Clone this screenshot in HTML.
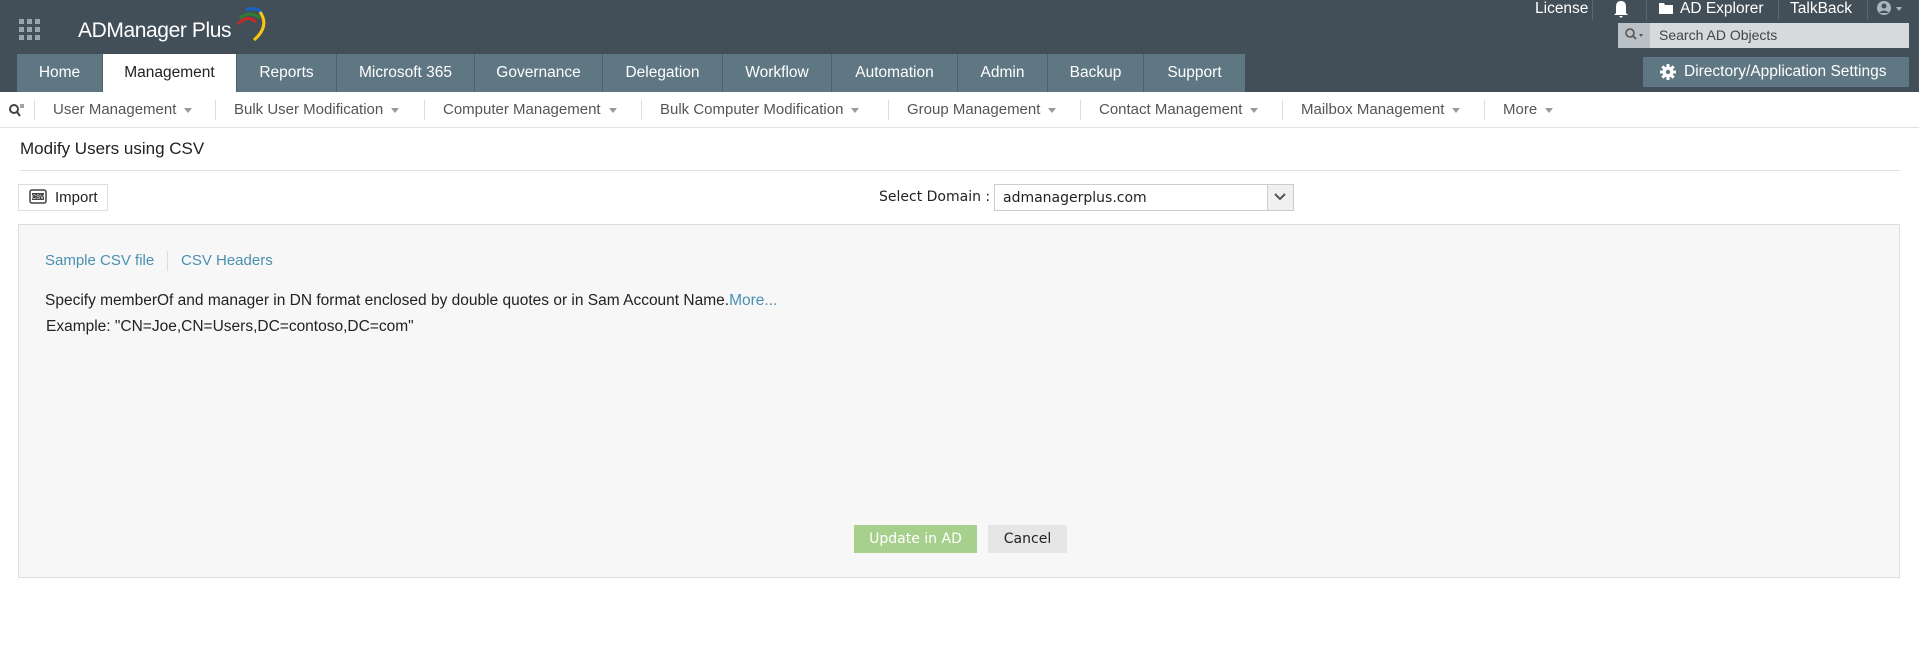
<!DOCTYPE html>
<html><head><meta charset="utf-8"><style>
*{margin:0;padding:0;box-sizing:border-box}
body{width:1919px;height:665px;background:#fff;font-family:"Liberation Sans",sans-serif;position:relative;overflow:hidden;color:#222}
.a{position:absolute}
#hdr{left:0;top:0;width:1919px;height:92px;background:#434f58}
.tab{position:absolute;top:54px;height:38px;background:#5f7683;color:#fff;font-size:15.5px;line-height:38px;text-align:center;border-right:1px solid #4f606b}
.tab.on{background:#fff;color:#222}
.top{color:#fff;font-size:15.5px;top:0;line-height:18px}
.sub{top:92px;height:36px;line-height:36px;font-size:15px;color:#555;border-bottom:1px solid #e2e2e2;width:1919px;left:0}
.sub span{position:absolute;top:0}
.sep{position:absolute;top:8px;width:1px;height:20px;background:#ddd}
.car{display:inline-block;width:0;height:0;border-left:4px solid transparent;border-right:4px solid transparent;border-top:5px solid #999;margin-left:8px;vertical-align:middle}
.v{font-family:"DejaVu Sans","Liberation Sans",sans-serif}
</style></head><body>
<div id="hdr" class="a"></div>
<svg class="a" style="left:19px;top:19px" width="22" height="22"><g fill="#9aa5ad"><rect x="0" y="0" width="5" height="5"/><rect x="8" y="0" width="5" height="5"/><rect x="16" y="0" width="5" height="5"/><rect x="0" y="8" width="5" height="5"/><rect x="8" y="8" width="5" height="5"/><rect x="16" y="8" width="5" height="5"/><rect x="0" y="16" width="5" height="5"/><rect x="8" y="16" width="5" height="5"/><rect x="16" y="16" width="5" height="5"/></g></svg>
<div class="a" style="left:78px;top:16px;color:#fff;font-size:21px;letter-spacing:-0.4px;line-height:30px">ADManager Plus</div>
<svg class="a" style="left:232px;top:4px" width="42" height="38"><path d="M8 14 Q18 6 28 14" stroke="#2e7d32" stroke-width="3" fill="none"/><path d="M6 20 Q16 10 24 18" stroke="#c62828" stroke-width="3" fill="none"/><path d="M14 6 Q26 2 30 10" stroke="#1565c0" stroke-width="3" fill="none"/><path d="M28 8 Q38 22 22 36" stroke="#f9c80e" stroke-width="3" fill="none"/></svg>

<div class="tab" style="left:17px;width:86px">Home</div>
<div class="tab on" style="left:103px;width:134px">Management</div>
<div class="tab" style="left:237px;width:100px">Reports</div>
<div class="tab" style="left:337px;width:138px">Microsoft 365</div>
<div class="tab" style="left:475px;width:128px">Governance</div>
<div class="tab" style="left:603px;width:120px">Delegation</div>
<div class="tab" style="left:723px;width:109px">Workflow</div>
<div class="tab" style="left:832px;width:126px">Automation</div>
<div class="tab" style="left:958px;width:90px">Admin</div>
<div class="tab" style="left:1048px;width:96px">Backup</div>
<div class="tab" style="left:1144px;width:101px;border-right:none">Support</div>

<div class="a top" style="left:1535px">License</div>
<div class="a" style="left:1592px;top:0;width:1px;height:20px;background:#5a6770"></div>
<svg class="a" style="left:1613px;top:0" width="16" height="18"><path d="M3 13 L3 7 Q3 1 8 1 Q13 1 13 7 L13 13 L15 15 L1 15 Z M6 16 L10 16 L8 18Z" fill="#fff"/></svg>
<div class="a" style="left:1646px;top:0;width:1px;height:20px;background:#5a6770"></div>
<svg class="a" style="left:1659px;top:3px" width="14" height="11"><path d="M0 0 H5 L6 2 H14 V11 H0Z" fill="#fff"/></svg>
<div class="a top" style="left:1680px">AD Explorer</div>
<div class="a" style="left:1778px;top:0;width:1px;height:20px;background:#5a6770"></div>
<div class="a top" style="left:1790px">TalkBack</div>
<div class="a" style="left:1867px;top:0;width:1px;height:20px;background:#5a6770"></div>
<svg class="a" style="left:1876px;top:0" width="30" height="18"><circle cx="8" cy="8" r="7" fill="#aab4bb"/><circle cx="8" cy="6" r="2.5" fill="#434f58"/><path d="M3 13 Q8 8 13 13" fill="#434f58"/><path d="M20 7 L26 7 L23 11Z" fill="#aab4bb"/></svg>

<div class="a" style="left:1618px;top:23px;width:291px;height:25px;background:#d6dadd"></div>
<div class="a" style="left:1618px;top:23px;width:32px;height:25px;background:#b9c1c6"></div>
<svg class="a" style="left:1625px;top:28px" width="22" height="14"><circle cx="5" cy="5" r="4" stroke="#555" stroke-width="1.6" fill="none"/><path d="M8 8 L11 11" stroke="#555" stroke-width="1.8"/><path d="M14 6 L18 6 L16 9Z" fill="#555"/></svg>
<div class="a" style="left:1659px;top:23px;line-height:25px;font-size:14px;color:#444">Search AD Objects</div>

<div class="a" style="left:1643px;top:57px;width:266px;height:30px;background:#5f7683"></div>
<svg class="a" style="left:1660px;top:64px" width="16" height="16"><g fill="#fff"><circle cx="8" cy="8" r="5.5"/><rect x="6.5" y="0" width="3" height="16"/><rect x="0" y="6.5" width="16" height="3"/><rect x="6.5" y="0" width="3" height="16" transform="rotate(45 8 8)"/><rect x="6.5" y="0" width="3" height="16" transform="rotate(-45 8 8)"/></g><circle cx="8" cy="8" r="2.2" fill="#5f7683"/></svg>
<div class="a" style="left:1684px;top:57px;line-height:30px;font-size:15.5px;color:#fff">Directory/Application Settings</div>

<div class="a sub">
<svg style="position:absolute;left:9px;top:12px" width="16" height="14"><circle cx="5" cy="5" r="4" stroke="#444" stroke-width="2" fill="none"/><path d="M8 8 L11 12" stroke="#444" stroke-width="2"/><path d="M11 1 H15 M11 3 H15" stroke="#444"/></svg>
<div class="sep" style="left:34px"></div>
<span style="left:53px">User Management<i class="car"></i></span>
<div class="sep" style="left:215px"></div>
<span style="left:234px">Bulk User Modification<i class="car"></i></span>
<div class="sep" style="left:424px"></div>
<span style="left:443px">Computer Management<i class="car"></i></span>
<div class="sep" style="left:641px"></div>
<span style="left:660px">Bulk Computer Modification<i class="car"></i></span>
<div class="sep" style="left:888px"></div>
<span style="left:907px">Group Management<i class="car"></i></span>
<div class="sep" style="left:1080px"></div>
<span style="left:1099px">Contact Management<i class="car"></i></span>
<div class="sep" style="left:1282px"></div>
<span style="left:1301px">Mailbox Management<i class="car"></i></span>
<div class="sep" style="left:1484px"></div>
<span style="left:1503px">More<i class="car"></i></span>
</div>

<div class="a" style="left:20px;top:137px;font-size:17px;color:#222;line-height:24px">Modify Users using CSV</div>
<div class="a" style="left:20px;top:170px;width:1880px;height:1px;background:#e0e0e0"></div>

<div class="a" style="left:18px;top:184px;width:90px;height:27px;border:1px solid #ddd;background:#fff"></div>
<svg class="a" style="left:29px;top:189px" width="18" height="16"><rect x="1" y="1" width="16" height="13" rx="2" fill="#fff" stroke="#444" stroke-width="1.5"/><rect x="3" y="4" width="12" height="7" fill="#444"/><text x="9" y="10" font-size="6" fill="#fff" text-anchor="middle" font-family="Liberation Sans">CSV</text></svg>
<div class="a" style="left:55px;top:184px;line-height:27px;font-size:15px">Import</div>

<div class="a v" style="left:879px;top:184px;line-height:27px;font-size:14px">Select Domain :</div>
<div class="a" style="left:994px;top:184px;width:300px;height:27px;border:1px solid #ccc;background:#fff"></div>
<div class="a" style="left:1267px;top:185px;width:26px;height:25px;background:#f0f0f0;border-left:1px solid #ccc"></div>
<svg class="a" style="left:1274px;top:193px" width="12" height="8"><path d="M1 1 L6 6 L11 1" stroke="#555" stroke-width="2" fill="none"/></svg>
<div class="a v" style="left:1003px;top:185px;line-height:27px;font-size:14px">admanagerplus.com</div>

<div class="a" style="left:18px;top:224px;width:1882px;height:354px;background:#f7f7f7;border:1px solid #ddd"></div>
<div class="a" style="left:45px;top:251px;font-size:15px;color:#4a90b0;line-height:20px">Sample CSV file</div>
<div class="a" style="left:167px;top:251px;width:1px;height:20px;background:#ddd"></div>
<div class="a" style="left:181px;top:251px;font-size:15px;color:#4a90b0;line-height:20px">CSV Headers</div>
<div class="a" style="left:45px;top:291px;font-size:15.5px;line-height:20px">Specify memberOf and manager in DN format enclosed by double quotes or in Sam Account Name.<span style="color:#4a90b0">More...</span></div>
<div class="a" style="left:46px;top:317px;font-size:15.5px;line-height:20px">Example: "CN=Joe,CN=Users,DC=contoso,DC=com"</div>

<div class="a v" style="left:854px;top:525px;width:123px;height:28px;background:#a8d08d;color:#fff;font-size:14px;line-height:28px;text-align:center">Update in AD</div>
<div class="a v" style="left:988px;top:525px;width:79px;height:28px;background:#e6e6e6;color:#222;font-size:14px;line-height:28px;text-align:center">Cancel</div>
</body></html>
